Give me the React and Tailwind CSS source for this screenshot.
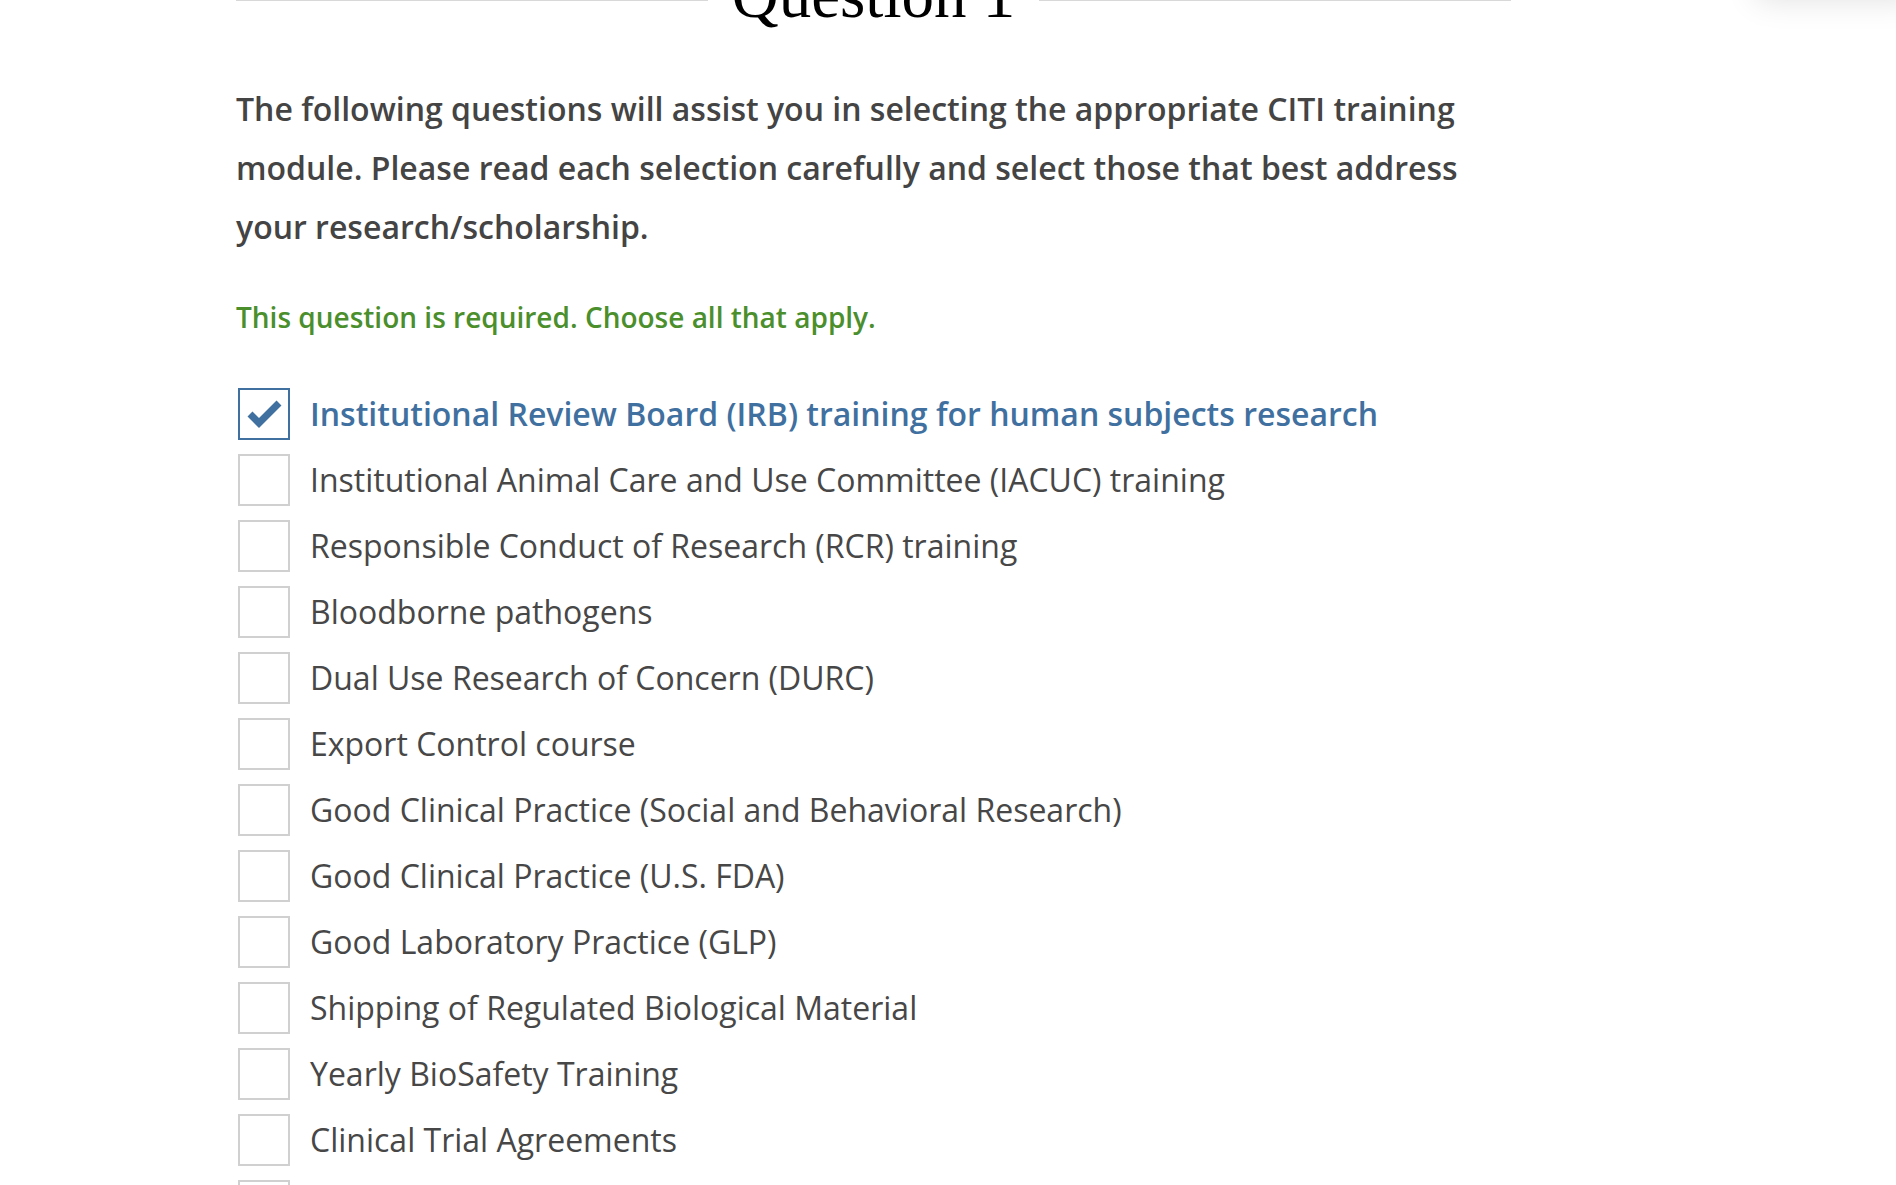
import { useState } from "react";

const OPTIONS = [
  "Institutional Review Board (IRB) training for human subjects research",
  "Institutional Animal Care and Use Committee (IACUC) training",
  "Responsible Conduct of Research (RCR) training",
  "Bloodborne pathogens",
  "Dual Use Research of Concern (DURC)",
  "Export Control course",
  "Good Clinical Practice (Social and Behavioral Research)",
  "Good Clinical Practice (U.S. FDA)",
  "Good Laboratory Practice (GLP)",
  "Shipping of Regulated Biological Material",
  "Yearly BioSafety Training",
  "Clinical Trial Agreements",
  "None of the above",
];

function CheckRow({ label, checked, onToggle }) {
  return (
    <label className="flex items-center gap-[20px] cursor-pointer">
      <span
        className={
          checked
            ? "flex items-center justify-center w-[52px] h-[52px] border-2 border-[#3f70a0] bg-white shrink-0"
            : "flex items-center justify-center w-[52px] h-[52px] border-2 border-[#d0d0d0] bg-white shrink-0"
        }
      >
        {checked && (
          <svg width="48" height="48" viewBox="0 0 48 48">
            <polyline
              points="10,24 19,33 39,13"
              fill="none"
              stroke="#3f70a0"
              strokeWidth="7"
              strokeLinejoin="miter"
            />
          </svg>
        )}
      </span>
      <input type="checkbox" className="hidden" checked={checked} onChange={onToggle} />
      <span
        className={
          checked
            ? "text-[32px] leading-[40px] font-semibold text-[#3f70a0]"
            : "text-[32px] leading-[40px] text-[#474747]"
        }
      >
        {label}
      </span>
    </label>
  );
}

export default function App() {
  const [selected, setSelected] = useState([0]);

  const toggle = (i) =>
    setSelected((s) => (s.includes(i) ? s.filter((x) => x !== i) : [...s, i]));

  return (
    <div
      className="relative min-h-screen bg-white overflow-hidden"
      style={{ fontFamily: '"Open Sans", sans-serif' }}
    >
      {/* shadow of a panel scrolled above the viewport */}
      <div className="absolute top-[-200px] right-[-20px] w-[160px] h-[200px] bg-white shadow-[0_0_30px_rgba(0,0,0,0.12)]" />

      <div className="w-[1275px] ml-[236px]">
        <div className="flex items-start -mt-[37px]">
          <div className="flex-1 h-px bg-[#d8d8d8] mt-[37px]" />
          <h2
            className="px-6 text-[65px] leading-none text-black"
            style={{ fontFamily: '"Liberation Serif", serif' }}
          >
            Question 1
          </h2>
          <div className="flex-1 h-px bg-[#d8d8d8] mt-[37px]" />
        </div>

        <p className="mt-[51px] text-[32px] leading-[59px] font-semibold text-[#444] pr-[30px]">
          The following questions will assist you in selecting the appropriate CITI training
          module. Please read each selection carefully and select those that best address
          your research/scholarship.
        </p>

        <p className="mt-[41px] text-[28px] leading-[40px] font-semibold text-[#4b8f2d]">
          This question is required. Choose all that apply.
        </p>

        <div className="mt-[51px] ml-[2px] flex flex-col gap-[14px]">
          {OPTIONS.map((o, i) => (
            <CheckRow
              key={o}
              label={o}
              checked={selected.includes(i)}
              onToggle={() => toggle(i)}
            />
          ))}
        </div>
      </div>
    </div>
  );
}
